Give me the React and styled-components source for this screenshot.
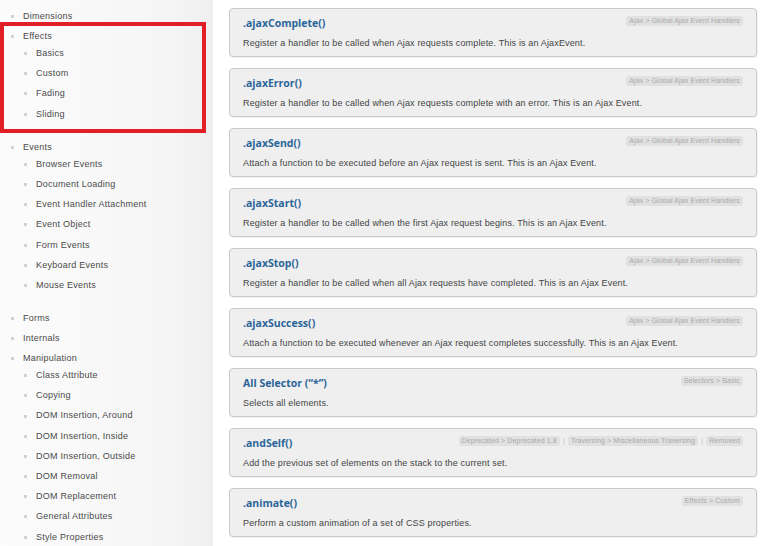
import React from "react";
import styled, { createGlobalStyle } from "styled-components";

const GlobalStyle = createGlobalStyle`
  html, body {
    margin: 0;
    padding: 0;
    background: #fff;
  }
  body {
    font-family: "Liberation Sans", Arial, sans-serif;
    width: 770px;
    height: 546px;
    overflow: hidden;
  }
`;

const Page = styled.div`
  position: relative;
  display: flex;
  width: 770px;
  height: 546px;
  overflow: hidden;
`;

const Sidebar = styled.nav`
  flex: 0 0 213px;
  height: 100%;
  background: linear-gradient(to right, #fcfcfc 0%, #f5f5f5 80%, #efefef 100%);
  padding-top: 6px;
  box-sizing: border-box;
`;

const NavList = styled.ul`
  list-style: none;
  margin: 0;
  padding: 0;
`;

const SubList = styled.ul`
  list-style: none;
  margin: -3px 0 13px 0;
  padding: 0;
`;

const NavItem = styled.li`
  position: relative;
  height: ${(p) => (p.$sub ? "20.2px" : "20px")};
  line-height: ${(p) => (p.$sub ? "20.2px" : "20px")};
  padding-left: ${(p) => (p.$sub ? "36px" : "23px")};
  font-size: 9px;
  letter-spacing: 0.25px;
  color: #4a4a4a;
  white-space: nowrap;

  &::before {
    content: "";
    position: absolute;
    left: ${(p) => (p.$sub ? "24px" : "11px")};
    top: 50%;
    width: 3px;
    height: 3px;
    margin-top: -1px;
    background: #d2d2d2;
  }
`;

const Highlight = styled.div`
  position: absolute;
  left: 0;
  top: 22px;
  width: 206px;
  height: 111px;
  border: 4px solid #e21f27;
  box-sizing: border-box;
  pointer-events: none;
`;

const Main = styled.main`
  flex: 1;
  display: flex;
  flex-direction: column;
  gap: 11px;
  padding: 8px 13px 0 16px;
`;

const Card = styled.article`
  height: 49px;
  box-sizing: border-box;
  background: #efefef;
  border: 1px solid #cacaca;
  border-radius: 4px;
  box-shadow: 1px 1px 1px rgba(0, 0, 0, 0.06);
  padding: 6px 13px 0 13px;
`;

const CardHead = styled.div`
  display: flex;
  justify-content: space-between;
  align-items: flex-start;
  height: 16px;
`;

const Title = styled.h2`
  margin: 0;
  font-family: "Open Sans", "Liberation Sans", sans-serif;
  font-weight: 700;
  font-size: 10.5px;
  line-height: 16px;
  color: #2a6598;
`;

const Tags = styled.div`
  display: flex;
  align-items: center;
  gap: 3px;
  margin-top: 1px;
`;

const Tag = styled.span`
  display: inline-block;
  background: #e1e1e1;
  color: #a9a9a9;
  font-size: 7px;
  letter-spacing: 0.12px;
  line-height: 10px;
  padding: 0 3px;
  border-radius: 3px;
  white-space: nowrap;
`;

const Sep = styled.span`
  color: #c4c4c4;
  font-size: 8px;
  line-height: 10px;
`;

const Desc = styled.p`
  margin: 5px 0 0 0;
  font-size: 9px;
  letter-spacing: 0.15px;
  line-height: 14px;
  color: #444;
  white-space: nowrap;
`;

const nav = [
  { label: "Dimensions" },
  { label: "Effects", children: ["Basics", "Custom", "Fading", "Sliding"] },
  {
    label: "Events",
    children: [
      "Browser Events",
      "Document Loading",
      "Event Handler Attachment",
      "Event Object",
      "Form Events",
      "Keyboard Events",
      "Mouse Events",
    ],
  },
  { label: "Forms" },
  { label: "Internals" },
  {
    label: "Manipulation",
    children: [
      "Class Attribute",
      "Copying",
      "DOM Insertion, Around",
      "DOM Insertion, Inside",
      "DOM Insertion, Outside",
      "DOM Removal",
      "DOM Replacement",
      "General Attributes",
      "Style Properties",
    ],
  },
];

const ajaxTag = ["Ajax > Global Ajax Event Handlers"];

const entries = [
  {
    title: ".ajaxComplete()",
    tags: ajaxTag,
    desc: "Register a handler to be called when Ajax requests complete. This is an AjaxEvent.",
  },
  {
    title: ".ajaxError()",
    tags: ajaxTag,
    desc: "Register a handler to be called when Ajax requests complete with an error. This is an Ajax Event.",
  },
  {
    title: ".ajaxSend()",
    tags: ajaxTag,
    desc: "Attach a function to be executed before an Ajax request is sent. This is an Ajax Event.",
  },
  {
    title: ".ajaxStart()",
    tags: ajaxTag,
    desc: "Register a handler to be called when the first Ajax request begins. This is an Ajax Event.",
  },
  {
    title: ".ajaxStop()",
    tags: ajaxTag,
    desc: "Register a handler to be called when all Ajax requests have completed. This is an Ajax Event.",
  },
  {
    title: ".ajaxSuccess()",
    tags: ajaxTag,
    desc: "Attach a function to be executed whenever an Ajax request completes successfully. This is an Ajax Event.",
  },
  {
    title: "All Selector (\u201C*\u201D)",
    tags: ["Selectors > Basic"],
    desc: "Selects all elements.",
  },
  {
    title: ".andSelf()",
    tags: [
      "Deprecated > Deprecated 1.8",
      "Traversing > Miscellaneous Traversing",
      "Removed",
    ],
    desc: "Add the previous set of elements on the stack to the current set.",
  },
  {
    title: ".animate()",
    tags: ["Effects > Custom"],
    desc: "Perform a custom animation of a set of CSS properties.",
  },
];

const App = () => (
  <Page>
    <GlobalStyle />
    <Sidebar>
      <NavList>
        {nav.map((item) => (
          <React.Fragment key={item.label}>
            <NavItem>{item.label}</NavItem>
            {item.children && (
              <SubList>
                {item.children.map((c) => (
                  <NavItem $sub key={c}>
                    {c}
                  </NavItem>
                ))}
              </SubList>
            )}
          </React.Fragment>
        ))}
      </NavList>
    </Sidebar>
    <Main>
      {entries.map((e) => (
        <Card key={e.title}>
          <CardHead>
            <Title>{e.title}</Title>
            <Tags>
              {e.tags.map((t, i) => (
                <React.Fragment key={t}>
                  {i > 0 && <Sep>|</Sep>}
                  <Tag>{t}</Tag>
                </React.Fragment>
              ))}
            </Tags>
          </CardHead>
          <Desc>{e.desc}</Desc>
        </Card>
      ))}
    </Main>
    <Highlight />
  </Page>
);

export default App;
